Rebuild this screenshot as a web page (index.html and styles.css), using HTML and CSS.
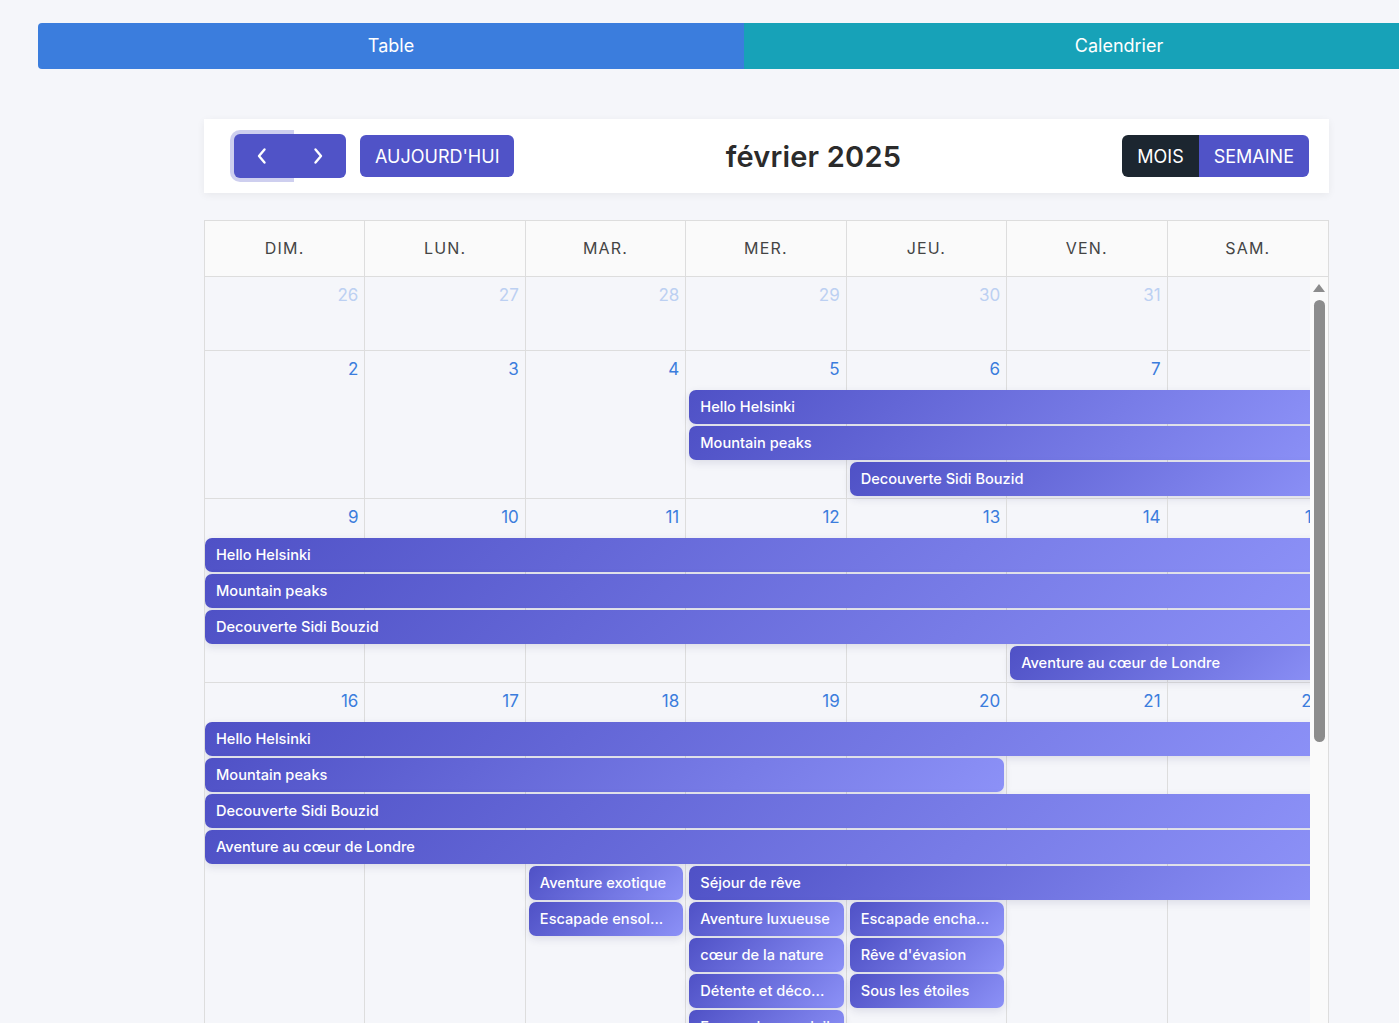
FILE: index.html
```html
<!DOCTYPE html>
<html lang="fr">
<head>
<meta charset="utf-8">
<title>Calendrier</title>
<link rel="stylesheet" href="styles.css">
</head>
<body>
<div class="page">
  <nav class="tabs">
    <button class="tab tab-table">Table</button>
    <button class="tab tab-cal">Calendrier</button>
  </nav>
  <main class="content">
    <div class="toolbar">
      <div class="tb-left">
        <div class="nav-group">
          <button class="btn nav-btn prev" aria-label="Précédent">
            <svg width="12" height="18" viewBox="0 0 12 18"><polyline points="8.5,2.5 3,9 8.5,15.5" fill="none" stroke="#fff" stroke-width="2.4" stroke-linecap="round" stroke-linejoin="round"/></svg>
          </button>
          <button class="btn nav-btn next" aria-label="Suivant">
            <svg width="12" height="18" viewBox="0 0 12 18"><polyline points="3.5,2.5 9,9 3.5,15.5" fill="none" stroke="#fff" stroke-width="2.4" stroke-linecap="round" stroke-linejoin="round"/></svg>
          </button>
        </div>
        <button class="btn today">AUJOURD'HUI</button>
      </div>
      <h2 class="title">février 2025</h2>
      <div class="view-group">
        <button class="btn view active">MOIS</button>
        <button class="btn view">SEMAINE</button>
      </div>
    </div>

    <div class="calendar">
      <div class="cal-head">
        <div class="hcell">DIM.</div>
        <div class="hcell">LUN.</div>
        <div class="hcell">MAR.</div>
        <div class="hcell">MER.</div>
        <div class="hcell">JEU.</div>
        <div class="hcell">VEN.</div>
        <div class="hcell">SAM.</div>
      </div>
      <div class="cal-body">
        <div class="viewport">
          <div class="weeks">
            <div class="week">
              <div class="days">
                <div class="day other">26</div>
                <div class="day other">27</div>
                <div class="day other">28</div>
                <div class="day other">29</div>
                <div class="day other">30</div>
                <div class="day other">31</div>
                <div class="day">1</div>
              </div>
              <div class="events"></div>
            </div>

            <div class="week">
              <div class="days">
                <div class="day">2</div>
                <div class="day">3</div>
                <div class="day">4</div>
                <div class="day">5</div>
                <div class="day">6</div>
                <div class="day">7</div>
                <div class="day">8</div>
              </div>
              <div class="events">
                <div class="ev starts" style="grid-row:1;grid-column:4/8">Hello Helsinki</div>
                <div class="ev starts" style="grid-row:2;grid-column:4/8">Mountain peaks</div>
                <div class="ev starts" style="grid-row:3;grid-column:5/8">Decouverte Sidi Bouzid</div>
              </div>
            </div>

            <div class="week">
              <div class="days">
                <div class="day">9</div>
                <div class="day">10</div>
                <div class="day">11</div>
                <div class="day">12</div>
                <div class="day">13</div>
                <div class="day">14</div>
                <div class="day">15</div>
              </div>
              <div class="events">
                <div class="ev" style="grid-row:1;grid-column:1/8">Hello Helsinki</div>
                <div class="ev" style="grid-row:2;grid-column:1/8">Mountain peaks</div>
                <div class="ev" style="grid-row:3;grid-column:1/8">Decouverte Sidi Bouzid</div>
                <div class="ev starts" style="grid-row:4;grid-column:6/8">Aventure au cœur de Londre</div>
              </div>
            </div>

            <div class="week">
              <div class="days">
                <div class="day">16</div>
                <div class="day">17</div>
                <div class="day">18</div>
                <div class="day">19</div>
                <div class="day">20</div>
                <div class="day">21</div>
                <div class="day">22</div>
              </div>
              <div class="events">
                <div class="ev" style="grid-row:1;grid-column:1/8">Hello Helsinki</div>
                <div class="ev ends" style="grid-row:2;grid-column:1/6">Mountain peaks</div>
                <div class="ev" style="grid-row:3;grid-column:1/8">Decouverte Sidi Bouzid</div>
                <div class="ev" style="grid-row:4;grid-column:1/8">Aventure au cœur de Londre</div>
                <div class="ev starts ends" style="grid-row:5;grid-column:3/4">Aventure exotique</div>
                <div class="ev starts" style="grid-row:5;grid-column:4/8">Séjour de rêve</div>
                <div class="ev starts ends" style="grid-row:6;grid-column:3/4">Escapade ensol...</div>
                <div class="ev starts ends" style="grid-row:6;grid-column:4/5">Aventure luxueuse</div>
                <div class="ev starts ends" style="grid-row:6;grid-column:5/6">Escapade encha...</div>
                <div class="ev starts ends" style="grid-row:7;grid-column:4/5">cœur de la nature</div>
                <div class="ev starts ends" style="grid-row:7;grid-column:5/6">Rêve d'évasion</div>
                <div class="ev starts ends" style="grid-row:8;grid-column:4/5">Détente et déco...</div>
                <div class="ev starts ends" style="grid-row:8;grid-column:5/6">Sous les étoiles</div>
                <div class="ev starts ends" style="grid-row:9;grid-column:4/5">Escapade au soleil</div>
              </div>
            </div>
          </div>
        </div>
        <div class="scrollbar">
          <div class="sb-arrow"></div>
          <div class="sb-thumb"></div>
        </div>
      </div>
    </div>
  </main>
</div>
</body>
</html>
```

FILE: styles.css
```css
* {
  box-sizing: border-box;
}

html,
body {
  margin: 0;
  overflow: hidden;
}

body {
  background: #f5f6fa;
  font-family: Inter, "Noto Sans", "Liberation Sans", sans-serif;
  color: #222;
}

.page {
  padding-top: 23px;
}

/* Tabs */
.tabs {
  display: grid;
  grid-template-columns: 706px 750px;
  width: 1456px;
  margin-left: 38px;
}

.tab {
  height: 46px;
  border: 0;
  padding: 0;
  color: #fff;
  font: 400 18px/46px Inter, "Liberation Sans", sans-serif;
}

.tab-table {
  background: #3b7ddd;
  border-radius: 4px 0 0 4px;
}

.tab-cal {
  background: #17a2b8;
  border-radius: 0 4px 4px 0;
}

/* Content */
.content {
  padding: 50px 0 0 204px;
  width: 1329px;
}

.toolbar {
  display: flex;
  align-items: center;
  justify-content: space-between;
  height: 74px;
  padding: 0 20px 0 30px;
  background: #fff;
  box-shadow: 0 2px 8px rgba(0, 0, 0, 0.06);
}

.tb-left {
  display: flex;
  align-items: center;
  gap: 14px;
}

.nav-group {
  display: flex;
}

.btn {
  border: 0;
  padding: 0;
  background: #5053c7;
  color: #fff;
  font-family: Inter, "Noto Sans", sans-serif;
  font-weight: 400;
  font-size: 18px;
}

.nav-btn {
  width: 56px;
  height: 44px;
  display: flex;
  align-items: center;
  justify-content: center;
}

.prev {
  border-radius: 6px 0 0 6px;
  box-shadow: 0 0 0 4px rgba(80, 83, 199, 0.28);
}

.next {
  border-radius: 0 6px 6px 0;
}

.today {
  height: 42px;
  padding: 0 15px;
  border-radius: 6px;
}

.title {
  margin: 0 10px 0 0;
  font-size: 29px;
  font-weight: 600;
  color: #2b2b2b;
  letter-spacing: 0.2px;
}

.view-group {
  display: flex;
}

.view {
  height: 42px;
  padding: 0 15px;
  border-radius: 0 6px 6px 0;
}

.view.active {
  background: #1c2630;
  border-radius: 6px 0 0 6px;
}

/* Calendar */
.calendar {
  margin-top: 27px;
  width: 1125px;
  border: 1px solid #dddddd;
  border-bottom: 0;
}

.cal-head {
  display: grid;
  grid-template-columns: repeat(7, minmax(0, 1fr));
  background: #fafafa;
  border-bottom: 1px solid #dddddd;
}

.hcell {
  height: 55px;
  line-height: 55px;
  text-align: center;
  border-right: 1px solid #dddddd;
  font-size: 16px;
  letter-spacing: 1.2px;
  color: #444;
}

.hcell:last-child {
  border-right: 0;
}

.cal-body {
  display: flex;
  height: 760px;
  background: #f5f6fa;
}

.viewport {
  flex: 1;
  overflow: hidden;
}

.weeks {
  width: 1123px;
}

.week {
  display: grid;
  min-height: 73px;
}

.week + .week {
  border-top: 1px solid #dddddd;
}

.days,
.events {
  grid-area: 1 / 1;
  display: grid;
  grid-template-columns: repeat(7, minmax(0, 1fr));
}

.day {
  border-right: 1px solid #dddddd;
  padding: 6px 6px 0 0;
  text-align: right;
  font-size: 17px;
  line-height: 24px;
  color: #3b7ddd;
}

.day:last-child {
  border-right: 0;
}

.day.other {
  color: #bcd0f2;
}

.events {
  grid-auto-rows: 36px;
  align-content: start;
  padding-top: 39px;
}

.ev {
  height: 34px;
  padding: 0 11px;
  border-radius: 7px;
  background: linear-gradient(135deg, #4f51c6 0%, #8c91f7 100%);
  box-shadow: 0 3px 8px rgba(40, 40, 90, 0.12);
  color: #fff;
  font-size: 14.6px;
  font-weight: 500;
  line-height: 34px;
  white-space: nowrap;
  overflow: hidden;
}

.ev.starts {
  margin-left: 3px;
}

.ev.ends {
  margin-right: 3px;
}

/* Scrollbar */
.scrollbar {
  flex: none;
  width: 18px;
  background: #fafafa;
  display: flex;
  flex-direction: column;
  align-items: center;
}

.sb-arrow {
  margin-top: 7px;
  width: 0;
  height: 0;
  border-left: 6px solid transparent;
  border-right: 6px solid transparent;
  border-bottom: 8px solid #8c8c8c;
}

.sb-thumb {
  margin-top: 8px;
  width: 11px;
  height: 442px;
  border-radius: 6px;
  background: #8c8c8c;
}
```
